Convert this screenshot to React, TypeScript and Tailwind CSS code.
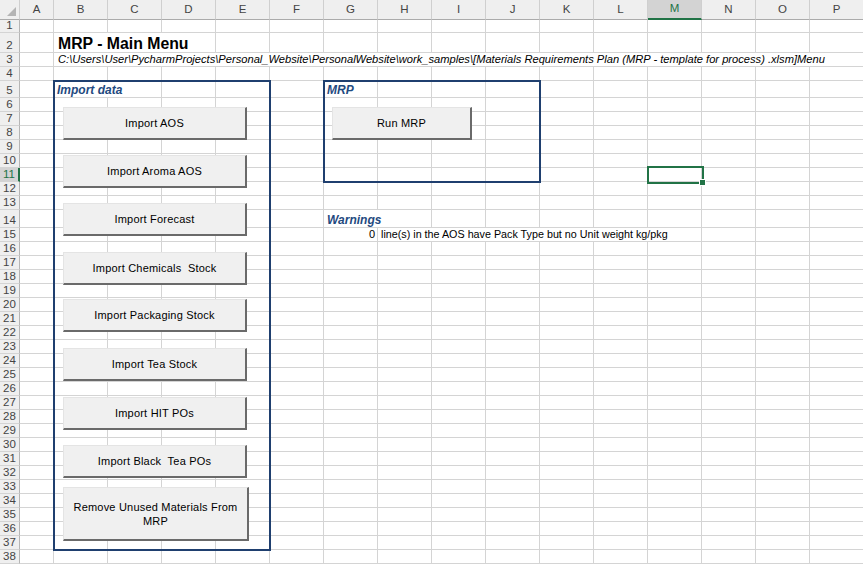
import type { ReactNode } from 'react';

const COLS = 'ABCDEFGHIJKLMNOP'.split('');
const ROWS = Array.from({ length: 38 }, (_, i) => i + 1);

type Seg = { span: 1 | 2 | 3 | 6 | 15; node?: ReactNode; cls?: string };

const SPAN: Record<Seg['span'], string> = {
    1: '',
    2: 'col-span-2',
    3: 'col-span-3',
    6: 'col-span-6',
    15: 'col-span-15',
};

const blanks = (n: number): Seg[] => Array.from({ length: n }, () => ({ span: 1 }));

const heading = 'text-[12px] leading-[13px] font-bold italic text-[#1f4a80] pl-[3px]';

const SPECIAL: Record<number, Seg[]> = {
    2: [
        { span: 1 },
        { span: 3, node: 'MRP - Main Menu', cls: 'text-[15.8px] leading-[16px] font-bold text-black pl-[4px]' },
        ...blanks(12),
    ],
    3: [
        { span: 1 },
        {
            span: 15,
            node: 'C:\\Users\\User\\PycharmProjects\\Personal_Website\\PersonalWebsite\\work_samples\\[Materials Requirements Plan (MRP - template for process) .xlsm]Menu',
            cls: 'text-[11.15px] leading-[13px] italic text-black pl-[4px]',
        },
    ],
    5: [{ span: 1 }, { span: 2, node: 'Import data', cls: heading }, ...blanks(3), { span: 1, node: 'MRP', cls: heading }, ...blanks(9)],
    14: [...blanks(6), { span: 2, node: 'Warnings', cls: heading }, ...blanks(8)],
    15: [
        ...blanks(6),
        { span: 1, node: '0', cls: 'text-[11px] leading-[13px] justify-end pr-[2px] text-black' },
        { span: 6, node: 'line(s) in the AOS have Pack Type but no Unit weight kg/pkg', cls: 'text-[10.75px] leading-[13px] pl-[3px] text-black' },
        ...blanks(3),
    ],
};

const IMPORTS = [
    { label: 'Import AOS', cls: 'w-[184px] h-[33px]' },
    { label: 'Import Aroma AOS', cls: 'w-[184px] h-[33px] mt-[15px]' },
    { label: 'Import Forecast', cls: 'w-[184px] h-[33px] mt-[15px]' },
    { label: 'Import Chemicals  Stock', cls: 'w-[184px] h-[33px] mt-[16px]' },
    { label: 'Import Packaging Stock', cls: 'w-[184px] h-[33px] mt-[14px]' },
    { label: 'Import Tea Stock', cls: 'w-[184px] h-[33px] mt-[16px]' },
    { label: 'Import HIT POs', cls: 'w-[184px] h-[33px] mt-[16px]' },
    { label: 'Import Black  Tea POs', cls: 'w-[184px] h-[33px] mt-[15px]' },
    { label: 'Remove Unused Materials From MRP', cls: 'w-[186px] h-[54px] mt-[9px] px-[4px]' },
];

function SheetButton({ label, className = '' }: { label: string; className?: string }) {
    return (
        <div
            className={`flex items-center justify-center whitespace-pre-wrap border-t border-l border-r-2 border-b-2 border-t-[#e4e4e4] border-l-[#e4e4e4] border-r-[#6a6a6a] border-b-[#6a6a6a] bg-[#f0f0f0] text-center text-[11px] leading-[14px] tracking-[0.2px] text-black ${className}`}
        >
            {label}
        </div>
    );
}

function SheetRow({ row }: { row: number }) {
    const segs = SPECIAL[row] ?? blanks(16);
    const selected = row === 11;
    return (
        <>
            <div
                className={`flex items-end justify-center pb-px text-[11.5px] leading-[12px] border-b border-b-[#d4d4d4] ${
                    selected
                        ? 'bg-[#d3d3d3] text-[#217346] border-r-2 border-r-[#217346]'
                        : 'bg-[#efefef] text-[#444] border-r border-r-[#b5b5b5]'
                }`}
            >
                {row}
            </div>
            {segs.map((s, i) => (
                <div
                    key={i}
                    className={`flex items-end overflow-hidden whitespace-nowrap border-r border-b border-[#d4d4d4] ${SPAN[s.span]} ${s.cls ?? ''}`}
                >
                    {s.node}
                </div>
            ))}
        </>
    );
}

const TEMPLATE =
    'grid grid-cols-[20px_34px_repeat(15,54px)] grid-rows-[20px_13px_20px_14px_14px_17px_repeat(8,14px)_18px_repeat(24,14px)]';

export default function App() {
    return (
        <div className="relative h-[564px] w-[863px] overflow-hidden bg-white font-['Liberation_Sans',Arial,sans-serif]">
            <div className={TEMPLATE}>
                <div className="relative border-r border-b border-r-[#cfcfcf] border-b-[#ababab] bg-[#efefef]">
                    <svg className="absolute right-[3px] bottom-[3px]" width="9" height="9" viewBox="0 0 9 9">
                        <path d="M9 0V9H0Z" fill="#b4b4b4" />
                    </svg>
                </div>
                {COLS.map((c) => (
                    <div
                        key={c}
                        className={`flex items-center justify-center text-[11.5px] border-r border-r-[#cfcfcf] ${
                            c === 'M'
                                ? 'bg-[#d3d3d3] text-[#217346] border-b-2 border-b-[#217346]'
                                : 'bg-[#efefef] text-[#444] border-b border-b-[#ababab]'
                        }`}
                    >
                        {c}
                    </div>
                ))}
                {ROWS.map((r) => (
                    <SheetRow key={r} row={r} />
                ))}
            </div>

            {/* drawing layer: cell borders, form buttons, selection */}
            <div className={`pointer-events-none absolute inset-0 ${TEMPLATE}`}>
                <div className="col-start-3 col-end-7 row-start-6 row-end-39 -m-px flex flex-col items-start border-2 border-[#1f3f6f] pt-[25px] pl-[8px]">
                    {IMPORTS.map((b) => (
                        <SheetButton key={b.label} label={b.label} className={b.cls} />
                    ))}
                </div>
                <div className="col-start-8 col-end-12 row-start-6 row-end-13 -m-px flex flex-col items-start border-2 border-[#1f3f6f] pt-[25px] pl-[7px]">
                    <SheetButton label="Run MRP" className="h-[33px] w-[140px]" />
                </div>
                <div className="relative col-start-14 row-start-12 -mt-[2px] -mr-[2px] -mb-[2px] -ml-px border-2 border-[#217346]">
                    <div className="absolute right-[-4px] bottom-[-4px] h-[7px] w-[7px] border border-white bg-[#217346]" />
                </div>
            </div>
        </div>
    );
}
